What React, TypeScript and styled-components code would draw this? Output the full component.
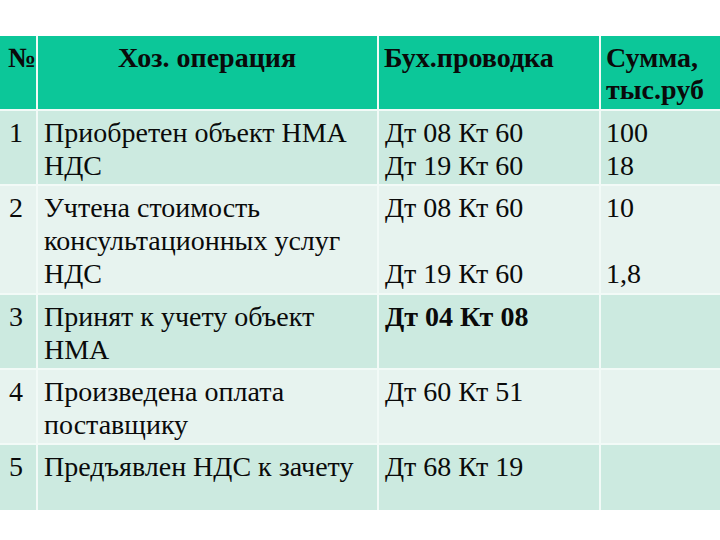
import React from "react";
import styled, { createGlobalStyle } from "styled-components";

const GlobalStyle = createGlobalStyle`
  html, body {
    margin: 0;
    padding: 0;
    background: #ffffff;
  }
`;

const Page = styled.div`
  width: 720px;
  height: 540px;
  padding-top: 36px;
  box-sizing: border-box;
  background: #ffffff;
  font-family: "Liberation Serif", "Times New Roman", serif;
  color: #0a0a0a;
`;

const Table = styled.div`
  display: grid;
  grid-template-columns: 36px 339px 220px 1fr;
  grid-template-rows: 73px 73px 107px 73px 73px 65px;
  column-gap: 2px;
  row-gap: 2px;
  background: #f2faf7;
`;

const Row = styled.div`
  display: contents;
`;

const HeadCell = styled.div<{ $center?: boolean }>`
  background: #0cc799;
  padding: 6px 6px 0 5px;
  font-size: 28px;
  line-height: 32px;
  font-weight: bold;
  text-align: ${(p) => (p.$center ? "center" : "left")};
  overflow: hidden;
`;

const NumHead = styled(HeadCell)`
  padding-left: 8px;
`;

const Cell = styled.div<{ $even?: boolean }>`
  background: ${(p) => (p.$even ? "#e7f3ef" : "#cceae0")};
  padding: 5px 6px 0 6px;
  font-size: 28px;
  line-height: 33px;
  overflow: hidden;
`;

const NumCell = styled(Cell)`
  padding-left: 9px;
`;

const SumCell = styled(Cell)`
  padding-left: 5px;
`;

const Line = styled.div<{ $bold?: boolean }>`
  min-height: 33px;
  white-space: nowrap;
  font-weight: ${(p) => (p.$bold ? "bold" : "normal")};
`;

interface Operation {
  n: string;
  text: string[];
  entry: string[];
  sum: string[];
  bold?: boolean;
}

const operations: Operation[] = [
  {
    n: "1",
    text: ["Приобретен объект НМА", "НДС"],
    entry: ["Дт 08 Кт 60", "Дт 19 Кт 60"],
    sum: ["100", "18"],
  },
  {
    n: "2",
    text: ["Учтена стоимость", "консультационных услуг", "НДС"],
    entry: ["Дт 08 Кт 60", "", "Дт 19 Кт 60"],
    sum: ["10", "", "1,8"],
  },
  {
    n: "3",
    text: ["Принят к учету объект", "НМА"],
    entry: ["Дт 04 Кт 08"],
    sum: [],
    bold: true,
  },
  {
    n: "4",
    text: ["Произведена оплата", "поставщику"],
    entry: ["Дт 60 Кт 51"],
    sum: [],
  },
  {
    n: "5",
    text: ["Предъявлен НДС к зачету"],
    entry: ["Дт 68 Кт 19"],
    sum: [],
  },
];

export default function App() {
  return (
    <Page>
      <GlobalStyle />
      <Table>
        <Row>
          <NumHead>№</NumHead>
          <HeadCell $center>Хоз. операция</HeadCell>
          <HeadCell>Бух.проводка</HeadCell>
          <HeadCell>
            Сумма,
            <br />
            тыс.руб
          </HeadCell>
        </Row>
        {operations.map((op, i) => {
          const even = i % 2 === 1;
          return (
            <Row key={op.n}>
              <NumCell $even={even}>{op.n}</NumCell>
              <Cell $even={even}>
                {op.text.map((t, j) => (
                  <Line key={j}>{t}</Line>
                ))}
              </Cell>
              <Cell $even={even}>
                {op.entry.map((t, j) => (
                  <Line key={j} $bold={op.bold}>
                    {t}
                  </Line>
                ))}
              </Cell>
              <SumCell $even={even}>
                {op.sum.map((t, j) => (
                  <Line key={j}>{t}</Line>
                ))}
              </SumCell>
            </Row>
          );
        })}
      </Table>
    </Page>
  );
}
